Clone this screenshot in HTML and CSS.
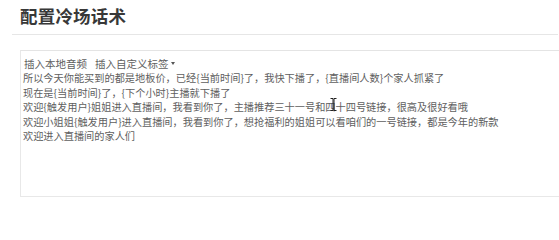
FILE: index.html
```html
<!DOCTYPE html>
<html lang="zh-CN">
<head>
<meta charset="utf-8">
<title>配置冷场话术</title>
<link rel="stylesheet" href="styles.css">
</head>
<body>
<div class="page">
  <div class="header"><h1 class="title">配置冷场话术</h1></div>
  <div class="divider"></div>
  <div class="editor">
    <div class="toolbar">
      <span class="tool">插入本地音频</span>
      <span class="tool">插入自定义标签<span class="caret"></span></span>
    </div>
    <div class="content">
      <div class="line">所以今天你能买到的都是地板价，已经{当前时间}了，我快下播了，{直播间人数}个家人抓紧了</div>
      <div class="line">现在是{当前时间}了，{下个小时}主播就下播了</div>
      <div class="line">欢迎{触发用户}姐姐进入直播间，我看到你了，主播推荐三十一号和四十四号链接，很高及很好看哦</div>
      <div class="line">欢迎小姐姐{触发用户}进入直播间，我看到你了，想抢福利的姐姐可以看咱们的一号链接，都是今年的新款</div>
      <div class="line">欢迎进入直播间的家人们</div>
      <svg class="ibeam" width="7" height="13" viewBox="0 0 7 13"><path d="M0.5 0.5h2.5v12H0.5M6.5 0.5H4v12h2.5" fill="none" stroke="#222" stroke-width="1"/></svg>
    </div>
  </div>
</div>
</body>
</html>
```

FILE: styles.css
```css
html, body {
  margin: 0;
  padding: 0;
  background: #ffffff;
}
.page {
  width: 559px;
  height: 202px;
  overflow: hidden;
  font-family: "Noto Sans CJK SC", "Noto Sans", sans-serif;
}
.header {
  height: 34px;
  padding-left: 20px;
  box-sizing: border-box;
  padding-top: 6px;
}
.title {
  margin: 0;
  font-size: 17.5px;
  line-height: 19px;
  font-weight: bold;
  color: #383838;
  letter-spacing: 0.2px;
}
.divider {
  height: 1px;
  background: #e6e6e6;
  margin: 0 1px 0 12px;
}
.editor {
  margin: 15px -2px 0 20px;
  height: 147px;
  box-sizing: border-box;
  border: 1px solid #e8e8e8;
  border-top-color: #e4e4e4;
}
.toolbar {
  display: flex;
  gap: 8px;
  padding: 5px 0 0 3px;
  height: 20px;
  box-sizing: border-box;
  font-size: 10.5px;
  line-height: 14px;
  color: #5e5e5e;
}
.tool {
  display: flex;
  align-items: center;
}
.caret {
  display: inline-block;
  width: 0;
  height: 0;
  margin-left: 2px;
  border-left: 2.5px solid transparent;
  border-right: 2.5px solid transparent;
  border-top: 3px solid #555555;
}
.content {
  position: relative;
  padding-left: 2px;
  font-size: 10.2px;
  line-height: 14.6px;
  color: #5e5e5e;
}
.line {
  white-space: nowrap;
}
.ibeam {
  position: absolute;
  left: 309px;
  top: 27px;
}
```
